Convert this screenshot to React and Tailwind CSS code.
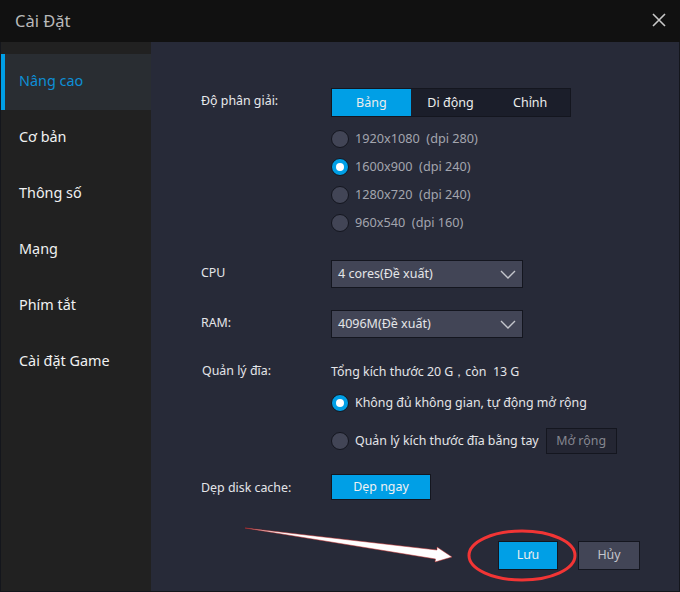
function Radio({ on }) {
  return on ? (
    <span className="w-[18px] h-[18px] rounded-full bg-[#009fe6] border border-[#14161f] flex items-center justify-center shrink-0">
      <span className="w-[8px] h-[8px] rounded-full bg-white" />
    </span>
  ) : (
    <span className="w-[18px] h-[18px] rounded-full bg-[#424556] border border-[#14161f] shrink-0" />
  );
}

function Res({ on, text }) {
  return (
    <div className="h-[28px] flex items-center gap-[6px]">
      <Radio on={on} />
      <span className="text-[12.7px] text-[#a3a5ae] whitespace-pre">{text}</span>
    </div>
  );
}

function Select({ text }) {
  return (
    <div className="w-[192px] h-[28px] bg-[#424556] border border-[#14161f] flex items-center justify-between pl-[6px] pr-[6px]">
      <span className="text-[12.5px] text-[#e4e5e8]">{text}</span>
      <svg width="16" height="9" viewBox="0 0 16 9" fill="none" stroke="#c4c6cc" strokeWidth="1.4">
        <path d="M1 1l7 7 7-7" />
      </svg>
    </div>
  );
}

function Item({ active, children }) {
  return active ? (
    <div className="h-[56px] bg-[#292d32] border-l-4 border-[#009fe6] flex items-center pl-[14px] pb-[2px] text-[14.4px] text-[#0e8fd6]">
      {children}
    </div>
  ) : (
    <div className="h-[56px] flex items-center pl-[18px] pb-[2px] text-[14.4px] text-[#f0f1f2]">{children}</div>
  );
}

export default function App() {
  return (
    <div className="w-[680px] h-[592px] flex flex-col bg-[#14161c] font-['Noto_Sans',sans-serif] overflow-hidden">
      <div className="h-[42px] -mb-px bg-[#111111] flex items-center justify-between pl-[15px] pr-[14px] shrink-0">
        <span className="text-[16.5px] text-[#b9b9b9]">Cài Đặt</span>
        <svg className="mb-[2px]" width="14" height="14" viewBox="0 0 14 14" fill="none" stroke="#c8c8c8" strokeWidth="1.6">
          <path d="M1 1l12 12M13 1L1 13" />
        </svg>
      </div>
      <div className="flex-1 flex min-h-0 px-px pb-px pt-px">
        <div className="w-[150px] bg-[#212121] pt-[12px] shrink-0">
          <Item active>Nâng cao</Item>
          <Item>Cơ bản</Item>
          <Item>Thông số</Item>
          <Item>Mạng</Item>
          <Item>Phím tắt</Item>
          <Item>Cài đặt Game</Item>
        </div>
        <div className="flex-1 bg-[#272a38] pl-[50px] pt-[46px] relative text-[12.4px] text-[#e4e5e8]">
          <div className="flex">
            <div className="w-[130px] text-[#e8e9ec] pt-[4px]">Độ phân giải:</div>
            <div>
              <div className="w-[240px] h-[29px] flex bg-[#1b1e2a] border border-[#14161f] text-[12.5px] text-[#eceded]">
                <div className="w-[79px] pt-[2px] bg-[#009fe6] flex items-center justify-center">Bảng</div>
                <div className="w-[80px] pt-[2px] flex items-center justify-center">Di động</div>
                <div className="w-[80px] pt-[2px] flex items-center justify-center">Chỉnh</div>
              </div>
              <div className="mt-[8px]">
                <Res text="1920x1080  (dpi 280)" />
                <Res on text="1600x900  (dpi 240)" />
                <Res text="1280x720  (dpi 240)" />
                <Res text="960x540  (dpi 160)" />
              </div>
            </div>
          </div>
          <div className="flex mt-[23px] items-center">
            <div className="w-[130px] pb-[2px]">CPU</div>
            <Select text="4 cores(Đề xuất)" />
          </div>
          <div className="flex mt-[22px] items-center">
            <div className="w-[130px] pb-[2px]">RAM:</div>
            <Select text="4096M(Đề xuất)" />
          </div>
          <div className="flex mt-[24px]">
            <div className="w-[130px] pl-px">Quản lý đĩa:</div>
            <div>
              <div className="h-[18px] pt-[2px] flex items-center whitespace-pre">Tổng kích thước 20 G，còn  13 G</div>
              <div className="mt-[14px] h-[18px] flex items-center gap-[6px]">
                <Radio on />
                <span>Không đủ không gian, tự động mở rộng</span>
              </div>
              <div className="mt-[16px] h-[26px] flex items-center gap-[6px]">
                <Radio />
                <span>Quản lý kích thước đĩa bằng tay</span>
                <span className="ml-[1px] w-[71px] h-[26px] bg-[#242633] border border-[#14161f] flex items-center justify-center text-[#868790]">Mở rộng</span>
              </div>
            </div>
          </div>
          <div className="flex mt-[20px] items-center">
            <div className="w-[130px] pt-[2px]">Dẹp disk cache:</div>
            <div className="w-[100px] h-[26px] bg-[#009fe6] border border-[#14161f] flex items-center justify-center text-[#f0f1f2]">Dẹp ngay</div>
          </div>
          <div className="absolute left-[347px] top-[499px] w-[60px] h-[29px] bg-[#009fe6] border border-[#14161f] flex items-center justify-center text-[#eceded]">Lưu</div>
          <div className="absolute left-[427px] top-[499px] w-[62px] h-[29px] bg-[#424556] border border-[#14161f] flex items-center justify-center text-[#c4c6cc]">Hủy</div>
          <svg className="absolute left-0 top-0 pointer-events-none" width="529" height="549" viewBox="151 43 529 549" fill="none">
            <polygon points="245,529 437,551 437,548 452,558 435,563 435.5,560" fill="#ffffff" stroke="#c22a2a" strokeWidth="0.5" />
            <ellipse cx="522" cy="556.5" rx="53" ry="24.5" stroke="#f23535" strokeWidth="3" />
          </svg>
        </div>
      </div>
    </div>
  );
}
